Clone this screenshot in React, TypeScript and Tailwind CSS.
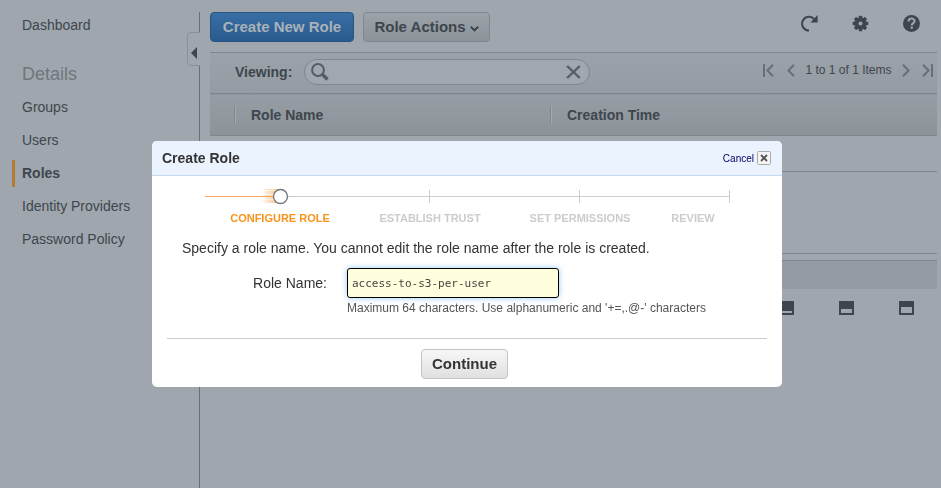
import React from "react";

const links = ["Groups", "Users", "Roles", "Identity Providers", "Password Policy"];

const steps = [
  { name: "Configure Role", box: "w-[150px]" },
  { name: "Establish Trust", box: "w-[150px]" },
  { name: "Set Permissions", box: "w-[150px]" },
  { name: "Review", box: "w-[76px]" },
];

function Sidebar() {
  return (
    <aside className="relative mt-3 w-[200px] shrink-0 border-r border-[#686f77]">
      <nav className="flex flex-col text-sm leading-[33px]">
        <a href="#dashboard" className="-mt-[3px] pl-[22px]">Dashboard</a>
        <h2 className="mt-4 mb-px pl-[22px] text-lg leading-[32px] text-[#6f767d]">Details</h2>
        {links.map((name) => (
          <a
            key={name}
            href="#section"
            className={
              name === "Roles"
                ? "my-[3px] ml-3 border-l-3 border-[#b17d35] pl-[7px] leading-[27px] font-bold"
                : "pl-[22px]"
            }
          >
            {name}
          </a>
        ))}
      </nav>
      <button
        type="button"
        aria-label="Collapse navigation"
        className="absolute top-5 -right-px flex h-[34px] w-[13px] items-center justify-end rounded-l-[4px] border border-r-0 border-[#8a9198] bg-[#9fa6ad] pr-[3px] pt-2"
      >
        <svg width="6" height="12" viewBox="0 0 6 12" className="fill-[#3e464d]">
          <path d="M6 0v12L0 6z" />
        </svg>
      </button>
    </aside>
  );
}

function Toolbar() {
  return (
    <div className="flex h-[30px] items-center gap-[9px]">
      <button
        type="button"
        className="h-[30px] w-36 rounded-[4px] border border-[#265584] bg-linear-to-b from-[#386fa5] to-[#2a5a8d] text-[15px] font-bold whitespace-nowrap text-[#a9b1b9]"
      >
        Create New Role
      </button>
      <button
        type="button"
        className="flex h-[30px] w-[127px] items-center justify-center gap-1 rounded-[4px] border border-[#7f868e] bg-linear-to-b from-[#9ba2a9] to-[#8c9399] text-[15px] font-bold whitespace-nowrap"
      >
        Role Actions
        <svg width="9" height="6" viewBox="0 0 9 6" className="mt-1 fill-none stroke-[#3e464d] stroke-2">
          <path d="M.8.8l3.7 3.5L8.2.8" />
        </svg>
      </button>
      <div className="mr-[17px] mb-2 ml-auto flex items-center gap-[34px]">
        <button type="button" aria-label="Refresh">
          <svg width="17" height="17" viewBox="0 0 17 17">
            <path d="M8 15.6A6.9 6.9 0 1 1 13.4 4.4" fill="none" stroke="#3e464d" strokeWidth="2" />
            <path d="M16.6 0v7.4H9.4z" fill="#3e464d" />
          </svg>
        </button>
        <button type="button" aria-label="Settings">
          <svg width="17" height="17" viewBox="-8.5 -8.5 17 17" fill="#3e464d">
            {[0, 45, 90, 135].map((a) => (
              <rect key={a} x="-1.8" y="-7.8" width="3.6" height="15.6" rx=".8" transform={`rotate(${a})`} />
            ))}
            <circle r="6" />
            <circle r="2" fill="#9fa6ad" />
          </svg>
        </button>
        <button type="button" aria-label="Help">
          <svg width="17" height="17" viewBox="0 0 17 17">
            <circle cx="8.5" cy="8.5" r="8.5" fill="#3e464d" />
            <path d="M5.6 6.5c0-3.9 6-3.7 6-.4 0 2.1-2.9 2-2.9 4.4" fill="none" stroke="#9fa6ad" strokeWidth="2" />
            <rect x="7.6" y="11.6" width="2.2" height="2.2" fill="#9fa6ad" />
          </svg>
        </button>
      </div>
    </div>
  );
}

function PageArrow({ label, d, w }: { label: string; d: string; w: number }) {
  return (
    <button type="button" aria-label={label}>
      <svg width={w} height="13" viewBox={`0 0 ${w} 13`} className="fill-none stroke-[#686f77] stroke-2">
        <path d={d} />
      </svg>
    </button>
  );
}

function RolesPanel() {
  return (
    <main className="min-w-0 flex-1 pt-3 pr-1 pl-[10px]">
      <Toolbar />
      <section className="mt-[10px] border-t border-[#7f868e]">
        <div className="flex h-10 items-center bg-linear-to-b from-[#9ba2a9] to-[#949ba2] pr-1 pb-[2px] pl-[25px]">
          <label htmlFor="filter" className="text-sm font-bold">Viewing:</label>
          <div className="ml-3 flex h-[26px] w-[286px] items-center rounded-full border border-[#7f868e] bg-[#a0a7ae] px-[6px]">
            <svg width="18" height="18" viewBox="0 0 18 18" className="shrink-0 fill-none stroke-[#555c64]">
              <circle cx="7" cy="7" r="5.9" strokeWidth="2" />
              <path d="M11.5 11.5l5 5" strokeWidth="3.4" />
            </svg>
            <input id="filter" type="text" className="min-w-0 flex-1 bg-transparent px-1 text-sm outline-none" />
            <button type="button" aria-label="Clear" className="mr-[2px]">
              <svg width="15" height="14" viewBox="0 0 15 14" className="fill-none stroke-[#555c64] stroke-[2.4]">
                <path d="M1.2 1l12.6 12M13.8 1L1.2 13" />
              </svg>
            </button>
          </div>
          <div className="mb-1 ml-auto flex items-center text-xs whitespace-nowrap">
            <PageArrow label="First page" w={11} d="M1 0v13M10 .8L4.4 6.5l5.6 5.7" />
            <span className="w-[13px]" />
            <PageArrow label="Previous page" w={8} d="M7 .8L1.4 6.5 7 12.2" />
            <span className="mx-2 w-[91px] text-center">1 to 1 of 1 Items</span>
            <PageArrow label="Next page" w={8} d="M1 .8l5.6 5.7L1 12.2" />
            <span className="w-3" />
            <PageArrow label="Last page" w={11} d="M10 0v13M1 .8l5.6 5.7L1 12.2" />
          </div>
        </div>
        <table className="w-full table-fixed text-left text-sm leading-[18px]">
          <thead>
            <tr className="h-[42px] border-y border-[#7f868e] bg-linear-to-b from-[#969da4] to-[#8c9399]">
              <th className="w-[340px] pl-6">
                <div className="border-l border-[#7f868e] pl-4 shadow-[inset_1px_0_#a3aab1]">Role Name</div>
              </th>
              <th>
                <div className="border-l border-[#7f868e] pl-4 shadow-[inset_1px_0_#a3aab1]">Creation Time</div>
              </th>
            </tr>
          </thead>
          <tbody>
            <tr className="h-9 border-b border-[#7f868e]">
              <td />
              <td />
            </tr>
          </tbody>
        </table>
        <div className="h-[82px] border-b border-[#7f868e]" />
      </section>
      <section className="mt-[6px]">
        <div className="h-[29px] border-t border-[#7f868e] bg-[#949ba2]" />
        <div className="mt-3 mr-[23px] flex justify-end gap-[45px]">
          {[11, 9, 7].map((top) => (
            <button key={top} type="button" aria-label="Resize details pane">
              <svg width="15" height="14" viewBox="0 0 15 14">
                <path d="M0 0h15v14H0z" fill="#3e464d" />
                <path d={`M2 ${top - 1}h11V12H2z`} fill="#9fa6ad" />
              </svg>
            </button>
          ))}
        </div>
      </section>
    </main>
  );
}

function Progress() {
  return (
    <div className="ml-[53px] w-[526px]">
      <svg width="526" height="18" viewBox="0 0 526 18" className="block">
        <path d="M75 9.5h449M224.5 3v13M374.5 3v13M524.5 3v13" fill="none" stroke="#ccc" />
        <path d="M0 9.5h68" stroke="#f2a863" />
        <defs>
          <linearGradient id="trail">
            <stop offset="0" stopColor="#f5a455" stopOpacity="0" />
            <stop offset="1" stopColor="#f5a455" stopOpacity=".45" />
          </linearGradient>
        </defs>
        <path d="M59 2h16v1H59zM57 4h16v2H57zM60 6h10v1H60zM54 8h15v3H54zM60 11h10v1H60zM56 13h17v2H56zM60 15h15v1H60z" fill="url(#trail)" />
        <path d="M58 2h18v14H58z" fill="url(#trail)" />
        <circle cx="75.5" cy="9.5" r="7" fill="#fff" stroke="#777" strokeWidth="1.4" />
      </svg>
      <ol className="mt-1 flex text-[11px] leading-[18px] font-bold whitespace-nowrap text-[#ccc] uppercase">
        {steps.map((s, i) => (
          <li key={s.name} className={`${s.box} ${i === 0 ? "text-[#f7941e]" : ""} text-center`}>
            {s.name}
          </li>
        ))}
      </ol>
    </div>
  );
}

function CreateRoleDialog() {
  return (
    <div className="fixed inset-0 flex items-start justify-center pt-[141px] pr-[7px]">
      <div role="dialog" aria-labelledby="title" className="w-[630px] overflow-hidden rounded-[5px] bg-white text-[#333]">
        <header className="flex h-[35px] items-center justify-between border-b border-[#c5dbf0] bg-[#eaf3fe] pr-[11px] pl-[10px]">
          <h1 id="title" className="text-sm font-bold">Create Role</h1>
          <button type="button" className="flex items-center gap-[3px] text-[10px] text-[#000066]">
            Cancel
            <svg width="14" height="14" viewBox="0 0 14 14">
              <rect x=".5" y=".5" width="13" height="13" rx="1" fill="#f4f4f4" stroke="#aaa" />
              <path d="M4 4l6 6M10 4l-6 6" stroke="#555" strokeWidth="1.8" />
            </svg>
          </button>
        </header>
        <form className="pt-[11px] pb-2">
          <Progress />
          <p className="mt-[11px] pl-[30px] text-sm">Specify a role name. You cannot edit the role name after the role is created.</p>
          <div className="mt-[10px] flex">
            <label htmlFor="role" className="w-[195px] pr-5 text-right text-sm leading-[30px]">Role Name:</label>
            <div>
              <input
                id="role"
                type="text"
                defaultValue="access-to-s3-per-user"
                className="block h-[30px] w-[212px] rounded-[3px] border border-black bg-[#ffffdd] px-1 font-['DejaVu_Sans_Mono',monospace] text-[11px] text-[#444] shadow-[0_0_6px_#9ecbf5] outline-none"
              />
              <p className="mt-[2px] text-xs text-[#555]">Maximum 64 characters. Use alphanumeric and '+=,.@-' characters</p>
            </div>
          </div>
          <div className="mx-[15px] mt-[22px] flex justify-center border-t border-[#ccc] pt-[10px] pr-[5px]">
            <button
              type="button"
              className="h-[30px] w-[87px] rounded-[4px] border border-[#c4c4c4] bg-linear-to-b from-[#f7f7f7] to-[#e0e0e0] text-[15px] font-bold"
            >
              Continue
            </button>
          </div>
        </form>
      </div>
    </div>
  );
}

export default function App() {
  return (
    <div className="flex min-h-screen bg-[#9fa6ad] font-['Liberation_Sans',Arial,sans-serif] text-[#3e464d]">
      <Sidebar />
      <RolesPanel />
      <CreateRoleDialog />
    </div>
  );
}
